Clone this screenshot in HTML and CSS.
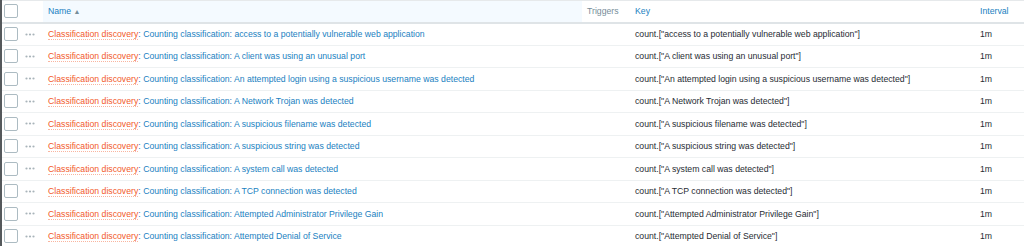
FILE: index.html
```html
<!DOCTYPE html>
<html lang="en">
<head>
  <meta charset="UTF-8" />
  <title>Items</title>
  <link rel="stylesheet" href="styles.css">
</head>
<body>
  <div class="frame">
    <table class="list-table">
      <colgroup>
        <col class="col-check">
        <col class="col-menu">
        <col class="col-name">
        <col class="col-triggers">
        <col class="col-key">
        <col class="col-interval">
      </colgroup>
      <thead>
        <tr>
          <th><span class="checkbox"></span></th>
          <th></th>
          <th class="sorted"><a href="#" class="link">Name</a> <span class="arrow">&#9650;</span></th>
          <th class="muted">Triggers</th>
          <th><a href="#" class="link">Key</a></th>
          <th><a href="#" class="link">Interval</a></th>
        </tr>
      </thead>
      <tbody id="rows"></tbody>
    </table>
  </div>

  <script>
    const names = [
      "access to a potentially vulnerable web application",
      "A client was using an unusual port",
      "An attempted login using a suspicious username was detected",
      "A Network Trojan was detected",
      "A suspicious filename was detected",
      "A suspicious string was detected",
      "A system call was detected",
      "A TCP connection was detected",
      "Attempted Administrator Privilege Gain",
      "Attempted Denial of Service"
    ];

    const tbody = document.getElementById("rows");
    tbody.innerHTML = names.map(n => `
      <tr>
        <td><span class="checkbox"></span></td>
        <td><svg class="dots" width="10" height="3" viewBox="0 0 10 3"><circle cx="1.5" cy="1.5" r="1.1"/><circle cx="5" cy="1.5" r="1.1"/><circle cx="8.5" cy="1.5" r="1.1"/></svg></td>
        <td><a href="#" class="parent">Classification discovery</a><span class="sep">: </span><a href="#" class="link">Counting classification: ${n}</a></td>
        <td></td>
        <td>count.["${n}"]</td>
        <td>1m</td>
      </tr>`).join("");
  </script>
</body>
</html>
```

FILE: styles.css
```css
* {
  box-sizing: border-box;
}

body {
  margin: 0;
  background: #ffffff;
  font-family: "Liberation Sans", Arial, sans-serif;
  font-size: 8.7px;
  color: #1f2c33;
}

.frame {
  border-left: 2px solid #55595c;
  min-height: 246px;
}

.list-table {
  width: 100%;
  border-collapse: collapse;
  table-layout: fixed;
  border-top: 1px solid #e6e9eb;
}

.col-check { width: 22px; }
.col-menu { width: 19px; }
.col-name { width: 539px; }
.col-triggers { width: 48px; }
.col-key { width: 345px; }
.col-interval { width: auto; }

th {
  text-align: left;
  font-weight: normal;
  height: 22px;
  padding: 0 5px;
  border-bottom: 2px solid #dfe4e7;
  white-space: nowrap;
}

th.sorted {
  background: #f4faff;
}

th.muted {
  color: #768d99;
}

td {
  height: 22.5px;
  padding: 0 5px;
  border-bottom: 1px solid #eef1f2;
  white-space: nowrap;
  overflow: hidden;
}

th:first-child,
td:first-child {
  padding: 0 0 0 2px;
}

td:nth-child(2) {
  padding: 0 0 0 1px;
}

.checkbox {
  display: block;
  width: 14px;
  height: 14px;
  border: 1px solid #acbbc2;
  border-radius: 2px;
  background: #ffffff;
}

.dots {
  display: block;
  fill: #a9b4ba;
}

a {
  text-decoration: none;
}

.link {
  color: #1a7fc1;
}

.arrow {
  color: #768d99;
  font-size: 7px;
}

.parent {
  color: #f25a2a;
  border-bottom: 1px dotted rgba(242, 90, 42, 0.45);
}

.sep {
  color: #1a7fc1;
}
```
